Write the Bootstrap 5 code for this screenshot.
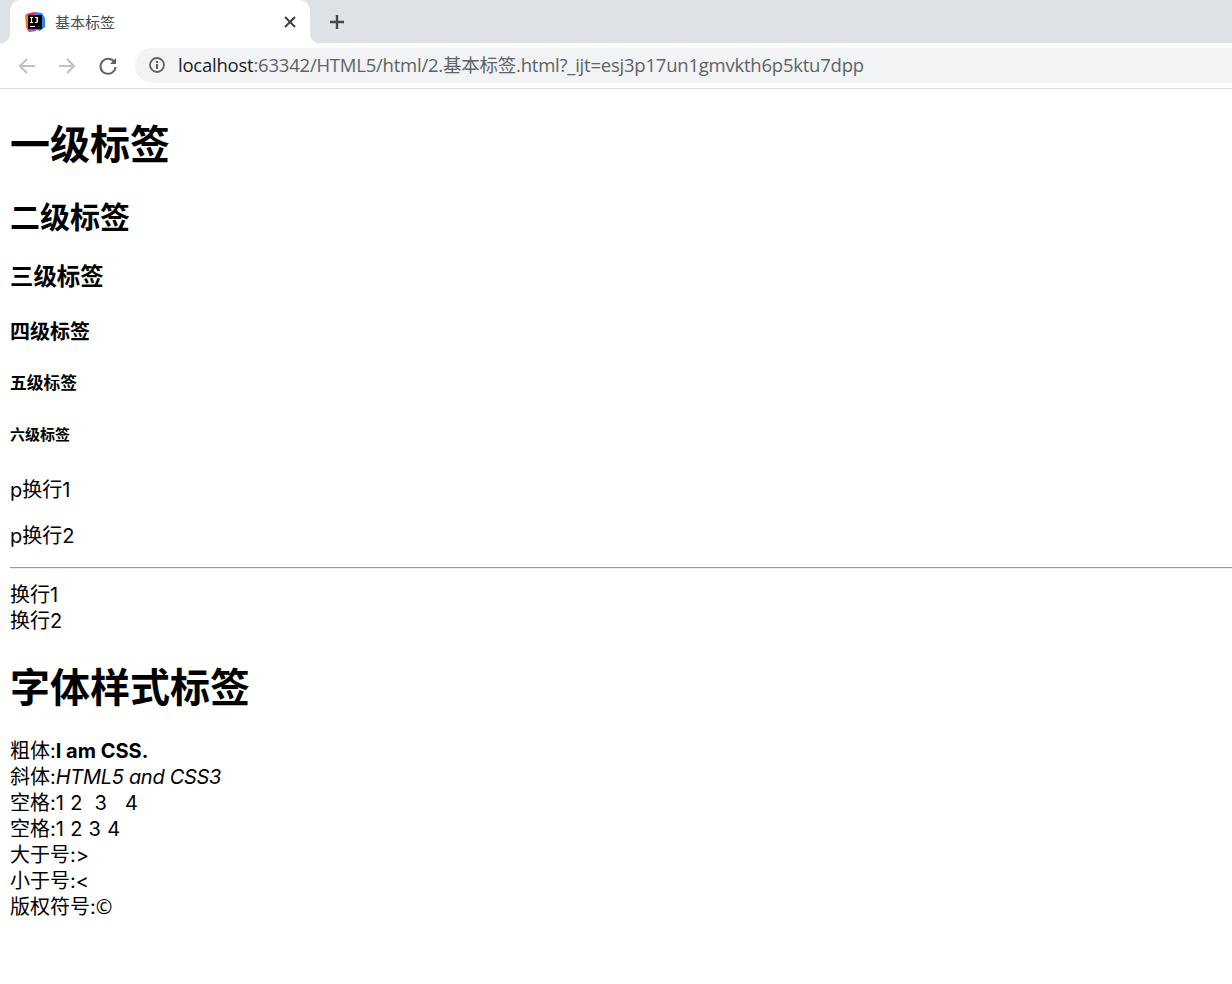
<!doctype html>
<html lang="zh">
<head>
<meta charset="utf-8">
<title>基本标签</title>
<link rel="stylesheet" href="https://cdn.jsdelivr.net/npm/bootstrap@5.3.0/dist/css/bootstrap.min.css">
<style>
html,body{background:#fff;overflow:hidden}
body{font-family:"Inter","Noto Sans CJK SC",sans-serif;color:#000;font-size:20px;line-height:26px;height:984px}
.tabstrip{height:43px;background:#dee1e6;padding-left:10px}
.pagetab{position:relative;width:300px;height:43px;background:#fff;border-radius:10px 10px 0 0;padding-left:15px;gap:10px;color:#45494f;font-size:15px}
.pagetab::before,.pagetab::after{content:"";position:absolute;bottom:0;width:10px;height:10px}
.pagetab::before{left:-10px;background:radial-gradient(circle at 0 0,#dee1e6 10px,#fff 10.5px)}
.pagetab::after{right:-10px;background:radial-gradient(circle at 100% 0,#dee1e6 10px,#fff 10.5px)}
.tabclose{margin-left:auto;margin-right:14px;line-height:0}
.tabtitle{line-height:20px;margin-top:2px}
.newtab{margin-left:19px;line-height:0}
.toolbar{height:46px;background:#fff;border-bottom:1px solid #dadce0;padding-left:17px}
.navicon{width:20px;height:20px;margin-right:20px;line-height:0}
.navicon.lasticon{margin-right:0;margin-left:1px}
.omnibox{margin-left:17px;flex:1;height:35px;margin-top:-1px;background:#f1f3f4;border-radius:18px 0 0 18px;padding-left:14px;gap:13px;font-size:18.500px;color:#5f6368;white-space:nowrap;font-family:"Open Sans","Noto Sans CJK SC",sans-serif;letter-spacing:-.225px}
.omnibox b{font-weight:400;color:#202124}
.pagebody{padding:0 0 0 10px}
.pagebody h1,.pagebody h2,.pagebody h3,.pagebody h4,.pagebody h5,.pagebody h6{font-weight:700;color:#000;font-family:"Noto Sans CJK SC",sans-serif}
.pagebody h1{font-size:40px;line-height:53px;margin:26.8px 0 25.8px}
.pagebody h2{font-size:30px;line-height:40px;margin:24.9px 0 25.9px}
.pagebody h3{font-size:23.4px;line-height:31px;margin:23.4px 0}
.pagebody h4{font-size:20px;line-height:26px;margin:26.6px 0 26.7px}
.pagebody h5{font-size:16.8px;line-height:22px;margin:26.7px 0 32.2px}
.pagebody h6{font-size:15px;line-height:18px;margin:32.2px 0 34.2px}
.pagebody p{margin:20px 0}
.pagebody p.beforerule{margin-bottom:18px}
.pagebody hr{margin:0 0 13px;border:0;border-top:1px solid #9a9a9a;border-bottom:1px solid #eee;opacity:1;height:2px}
.pagebody h1.secondhead{margin:24.8px 0 25.8px}
.pagebody b{font-weight:700}
.pagebody i{letter-spacing:-.3px}
.spacedline{letter-spacing:.3px}
.copymark{font-family:"Open Sans",sans-serif}
</style>
</head>
<body>
<div class="tabstrip d-flex align-items-start">
  <div class="pagetab d-flex align-items-center">
    <svg width="20" height="20" viewBox="0 0 20 20" aria-hidden="true">
      <path d="M1 2 L9 0 L14 3 L4 6 Z" fill="#f0246a"/>
      <path d="M10 0 L17 1 L20 6 L20 15 L15 19 L8 17 Z" fill="#2f7ff0"/>
      <path d="M0 3 L4 3 L6 17 L3 20 L1 15 Z" fill="#f97a12"/>
      <path d="M2 14 L10 14 L11 19 L4 20 Z" fill="#a93fe0"/>
      <rect x="3" y="3" width="14" height="14" fill="#000"/>
      <path d="M5 5h3v1h-1v4h1v1h-3v-1h1v-4h-1zM10 5h3v5l-1 1h-2v-1h1.500v-4h-1.500z" fill="#fff"/>
      <rect x="5" y="14" width="5" height="1" fill="#fff"/>
    </svg>
    <span class="tabtitle">基本标签</span>
    <span class="tabclose"><svg width="12" height="12" viewBox="0 0 12 12" aria-hidden="true"><path d="M1 1 11 11M11 1 1 11" stroke="#3c4043" stroke-width="2"/></svg></span>
  </div>
  <span class="newtab align-self-center"><svg width="16" height="16" viewBox="0 0 16 16" aria-hidden="true"><path d="M8 1V15M1 8H15" stroke="#45494f" stroke-width="2.400"/></svg></span>
</div>
<div class="toolbar d-flex align-items-center">
  <span class="navicon"><svg width="20" height="20" viewBox="0 0 20 20" aria-hidden="true"><path d="M18 10H3M10 3 3 10l7 7" fill="none" stroke="#bdc1c6" stroke-width="2"/></svg></span>
  <span class="navicon"><svg width="20" height="20" viewBox="0 0 20 20" aria-hidden="true"><path d="M2 10H17M10 3l7 7-7 7" fill="none" stroke="#bdc1c6" stroke-width="2"/></svg></span>
  <span class="navicon lasticon"><svg width="20" height="20" viewBox="0 0 20 20" aria-hidden="true"><path d="M16.500 6.500A7.500 7.500 0 1 0 17.500 11" fill="none" stroke="#5f6368" stroke-width="2"/><path d="M18 2v6h-6z" fill="#5f6368"/></svg></span>
  <div class="omnibox d-flex align-items-center">
    <svg width="16" height="16" viewBox="0 0 16 16" aria-hidden="true"><circle cx="8" cy="8" r="7" fill="none" stroke="#5f6368" stroke-width="1.800"/><rect x="7" y="7" width="2" height="5" fill="#5f6368"/><rect x="7" y="4" width="2" height="2" fill="#5f6368"/></svg>
    <span><b>localhost</b>:63342/HTML5/html/2.基本标签.html?_ijt=esj3p17un1gmvkth6p5ktu7dpp</span>
  </div>
</div>
<main class="pagebody">
  <h1>一级标签</h1>
  <h2>二级标签</h2>
  <h3>三级标签</h3>
  <h4>四级标签</h4>
  <h5>五级标签</h5>
  <h6>六级标签</h6>
  <p>p换行1</p>
  <p class="beforerule">p换行2</p>
  <hr>
  换行1<br>换行2
  <h1 class="secondhead">字体样式标签</h1>
  粗体:<b>I am CSS.</b><br>
  斜体:<i>HTML5 and CSS3</i><br>
  空格:<span class="spacedline">1&nbsp;2&nbsp;&nbsp;3&nbsp;&nbsp;&nbsp;4</span><br>
  空格:<span class="spacedline">1 2 3 4</span><br>
  大于号:&gt;<br>
  小于号:&lt;<br>
  版权符号:<span class="copymark">&copy;</span>
</main>
<script src="https://cdn.jsdelivr.net/npm/bootstrap@5.3.0/dist/js/bootstrap.bundle.min.js"></script>
</body>
</html>
